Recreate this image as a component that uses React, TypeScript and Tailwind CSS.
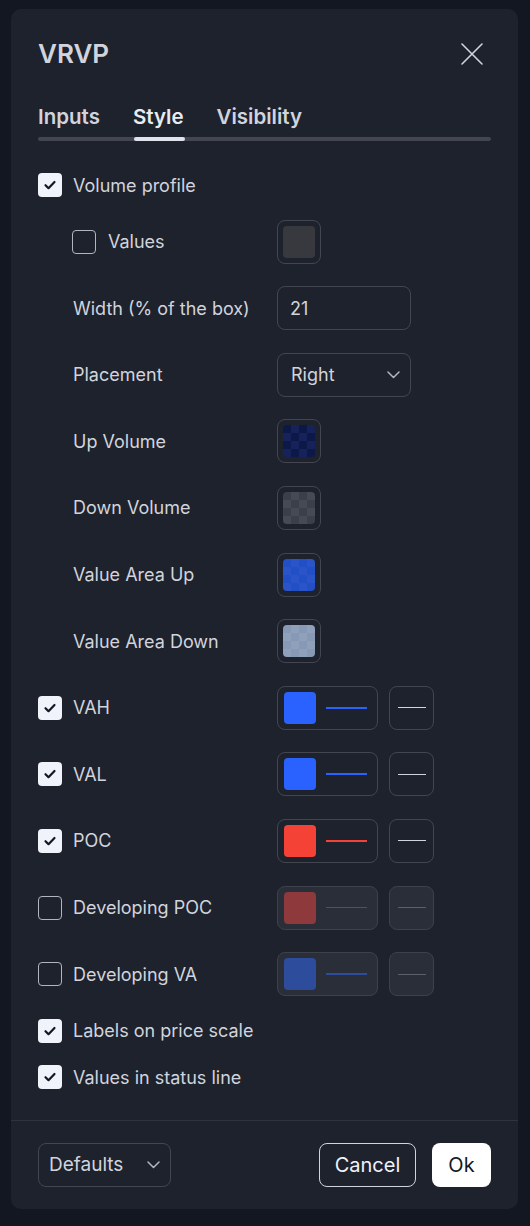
import { ReactNode } from "react";

type Line = { label: string; color: string; on: boolean };

const lines: Line[] = [
  { label: "VAH", color: "#2962ff", on: true },
  { label: "VAL", color: "#2962ff", on: true },
  { label: "POC", color: "#f44336", on: true },
  { label: "Developing POC", color: "#8e3a3c", on: false },
  { label: "Developing VA", color: "#2d4c9c", on: false },
];

function Checkbox({ checked }: { checked: boolean }) {
  if (!checked) {
    return <div className="w-6 h-6 shrink-0 rounded-[4px] border border-[#b2b5be]" />;
  }
  return (
    <div className="w-6 h-6 shrink-0 rounded-[4px] bg-[#f0f3fa] flex items-center justify-center">
      <svg width="14" height="14" viewBox="0 0 14 14" fill="none">
        <path d="M2.5 7.2l3 3 6-6.2" stroke="#131722" strokeWidth="2.2" strokeLinecap="round" strokeLinejoin="round" />
      </svg>
    </div>
  );
}

function Chevron() {
  return (
    <svg width="13" height="8" viewBox="0 0 13 8" fill="none">
      <path d="M1 1l5.5 5.5L12 1" stroke="#b2b5be" strokeWidth="1.5" strokeLinecap="round" strokeLinejoin="round" />
    </svg>
  );
}

// 4x4 transparency checker under a semi-transparent colour
function Checker({ a, b }: { a: string; b: string }) {
  const cells = Array.from({ length: 16 }, (_, i) => (Math.floor(i / 4) + i) % 2 === 0);
  return (
    <div className="w-8 h-8 rounded-[4px] overflow-hidden grid grid-cols-4 grid-rows-4">
      {cells.map((dark, i) => (
        <div key={i} style={{ backgroundColor: dark ? a : b }} />
      ))}
    </div>
  );
}

function Swatch({ children }: { children: ReactNode }) {
  return (
    <div className="w-[44px] h-[44px] rounded-[8px] border border-[#434651] flex items-center justify-center">
      {children}
    </div>
  );
}

function Row({ label, indent, children }: { label: ReactNode; indent?: boolean; children?: ReactNode }) {
  return (
    <div className="flex items-center h-[44px]">
      <div className={`w-[239px] flex items-center ${indent ? "pl-[35px]" : ""}`}>{label}</div>
      {children}
    </div>
  );
}

export default function App() {
  return (
    <div
      className="w-[530px] h-[1226px] bg-[#131722] pt-[9px] pl-[11px] text-[#d1d4dc]"
      style={{ fontFamily: "Inter, 'Noto Sans', sans-serif" }}
    >
      <div className="w-[507px] h-[1200px] rounded-[10px] bg-[#1e222d] flex flex-col">
        <div className="px-[27px] pt-[29px]">
          <div className="flex items-center justify-between h-8">
            <div className="text-[26px] font-semibold leading-8">VRVP</div>
            <svg width="22" height="22" viewBox="0 0 22 22" className="mr-[8px]">
              <path d="M1 1l20 20M21 1L1 21" stroke="#d1d4dc" strokeWidth="1.6" strokeLinecap="round" />
            </svg>
          </div>

          <div className="mt-[33px] flex gap-[33px] text-[20.5px] font-semibold leading-7">
            <div>Inputs</div>
            <div className="text-[#e9ebf0]">Style</div>
            <div>Visibility</div>
          </div>
          <div className="mt-[6px] h-[4px] rounded-full bg-[#434651] relative">
            <div className="absolute left-[96px] top-0 h-[4px] w-[51px] rounded-full bg-[#e0e3eb]" />
          </div>
        </div>

        <div className="flex-1 px-[27px] pt-[32px] flex flex-col gap-[22.6px] text-[18px]">
          <div className="flex items-center gap-[11px] h-6">
            <Checkbox checked />
            <span>Volume profile</span>
          </div>

          <Row
            indent
            label={
              <div className="flex items-center gap-[12px] -ml-[1px]">
                <Checkbox checked={false} />
                <span>Values</span>
              </div>
            }
          >
            <Swatch>
              <div className="w-8 h-8 rounded-[4px] bg-[#38393f]" />
            </Swatch>
          </Row>

          <Row indent label="Width (% of the box)">
            <div className="w-[134px] h-[44px] rounded-[8px] border border-[#434651] flex items-center px-[12px]">21</div>
          </Row>

          <Row indent label="Placement">
            <div className="w-[134px] h-[44px] rounded-[8px] border border-[#434651] flex items-center justify-between pl-[13px] pr-[10px]">
              <span>Right</span>
              <Chevron />
            </div>
          </Row>

          <Row indent label="Up Volume">
            <Swatch>
              <Checker a="#0c1848" b="#15235a" />
            </Swatch>
          </Row>
          <Row indent label="Down Volume">
            <Swatch>
              <Checker a="#3a3f4a" b="#454a55" />
            </Swatch>
          </Row>
          <Row indent label="Value Area Up">
            <Swatch>
              <Checker a="#234fc6" b="#2a55c9" />
            </Swatch>
          </Row>
          <Row indent label="Value Area Down">
            <Swatch>
              <Checker a="#8799b6" b="#8fa0bb" />
            </Swatch>
          </Row>

          {lines.map((l) => (
            <Row
              key={l.label}
              label={
                <div className="flex items-center gap-[11px]">
                  <Checkbox checked={l.on} />
                  <span>{l.label}</span>
                </div>
              }
            >
              <div
                className={`w-[101px] h-[44px] rounded-[8px] border flex items-center pl-[6px] ${
                  l.on ? "border-[#434651]" : "border-[#3d414c] bg-[#2a2e39]"
                }`}
              >
                <div className="w-8 h-8 rounded-[4px]" style={{ backgroundColor: l.color }} />
                <div
                  className={`ml-[10px] w-[41px] ${l.on ? "h-[2px]" : "h-[1.5px]"}`}
                  style={{ backgroundColor: l.color }}
                />
              </div>
              <div
                className={`ml-[11px] w-[45px] h-[44px] rounded-[8px] border flex items-center justify-center ${
                  l.on ? "border-[#434651]" : "border-[#3d414c] bg-[#2a2e39]"
                }`}
              >
                <div className={`w-[28px] h-px ${l.on ? "bg-[#d1d4dc]" : "bg-[#5d606b]"}`} />
              </div>
            </Row>
          ))}

          <div className="flex items-center gap-[11px] h-6">
            <Checkbox checked />
            <span>Labels on price scale</span>
          </div>
          <div className="flex items-center gap-[11px] h-6">
            <Checkbox checked />
            <span>Values in status line</span>
          </div>
        </div>

        <div className="border-t border-[#2f333e] px-[27px] py-[22px] flex items-center text-[20px]">
          <div className="w-[133px] h-[44px] rounded-[8px] border border-[#434651] flex items-center justify-between pl-[10px] pr-[10px] text-[19px]">
            <span>Defaults</span>
            <Chevron />
          </div>
          <div className="ml-auto w-[97px] h-[44px] rounded-[8px] border border-[#d1d4dc] flex items-center justify-center text-[#f0f3fa]">
            Cancel
          </div>
          <div className="ml-[16px] w-[59px] h-[44px] rounded-[8px] bg-white flex items-center justify-center text-[#131722]">
            Ok
          </div>
        </div>
      </div>
    </div>
  );
}
